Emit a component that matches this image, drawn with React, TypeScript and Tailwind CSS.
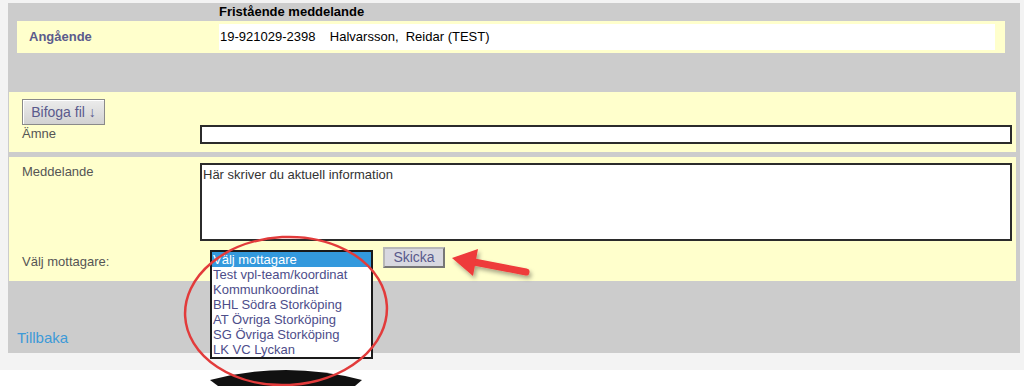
import React from "react";

const recipients = [
  "Välj mottagare",
  "Test vpl-team/koordinat",
  "Kommunkoordinat",
  "BHL Södra Storköping",
  "AT Övriga Storköping",
  "SG Övriga Storköping",
  "LK VC Lyckan",
];

function Annotations() {
  return (
    <svg
      className="pointer-events-none absolute left-0 top-0"
      width={1024}
      height={386}
      viewBox="0 0 1024 386"
    >
      <defs>
        <filter id="shadow" x="-20%" y="-40%" width="140%" height="180%">
          <feDropShadow dx="2" dy="3" stdDeviation="2" floodColor="#000" floodOpacity="0.35" />
        </filter>
      </defs>
      {/* black crescent below the list */}
      <path d="M210 380 Q286 360 362 380 L355 386 L218 386 Z" fill="#111" />
      {/* red ellipse around recipients */}
      <ellipse
        cx={286}
        cy={311}
        rx={101}
        ry={74}
        fill="none"
        stroke="#e23b3b"
        strokeWidth={2.5}
        transform="rotate(-3 286 311)"
      />
      {/* red arrow to Skicka */}
      <g filter="url(#shadow)">
        <line x1={474} y1={262} x2={526} y2={272} stroke="#ee3a3a" strokeWidth={7} strokeLinecap="round" />
        <polygon points="452,258 478,249 473,276" fill="#ee3a3a" />
      </g>
    </svg>
  );
}

export default function App() {
  return (
    <div
      className="relative h-[386px] w-[1024px] overflow-hidden bg-white text-[13px] text-[#555]"
      style={{ fontFamily: '"Liberation Sans", Arial, sans-serif' }}
    >
      <div className="h-[370px] bg-[#f3f3f3] pl-2 pr-1 pt-[3px]">
        <div className="flex h-[350px] flex-col bg-[#cccccc]">
          {/* header */}
          <div className="flex h-[18px] items-center pl-[211px] font-bold text-black">
            Fristående meddelande
          </div>

          {/* Angående */}
          <div className="ml-[9px] flex h-[32px] w-[988px] items-center bg-[#ffffcc]">
            <div className="w-[202px] pl-3 font-bold text-[#5b5b8c]">Angående</div>
            <div className="flex h-[26px] w-[776px] items-center bg-white pl-px text-black">
              19-921029-2398&nbsp;&nbsp;&nbsp;&nbsp;Halvarsson,&nbsp;&nbsp;Reidar (TEST)
            </div>
          </div>

          <div className="h-[39px]" />

          {/* Bifoga / Ämne */}
          <div className="ml-px h-[60px] w-[1007px] bg-[#ffffcc] pl-[13px] pt-[7px]">
            <button className="flex h-[26px] w-[83px] items-center justify-center border border-[#8a8a8a] bg-gradient-to-b from-[#ececec] to-[#d2d2d2] text-[14px] text-[#5a5a8c] shadow-[inset_1px_1px_0_#fff]">
              Bifoga fil ↓
            </button>
            <div className="flex h-[19px] items-start">
              <div className="w-[178px] leading-[17px]">Ämne</div>
              <div className="h-[19px] w-[812px] border-2 border-[#2b2b2b] bg-white" />
            </div>
          </div>

          <div className="h-[5px]" />

          {/* Meddelande / mottagare */}
          <div className="ml-px h-[124px] w-[1007px] bg-[#ffffcc] pl-[13px] pt-[6px]">
            <div className="flex">
              <div className="w-[178px] pt-[1px] leading-[16px]">Meddelande</div>
              <div className="h-[78px] w-[812px] border-2 border-[#2b2b2b] bg-white pl-[1px] pt-[2px] leading-[16px] text-[#333]">
                Här skriver du aktuell information
              </div>
            </div>
            <div className="mt-[6px] flex items-start">
              <div className="w-[188px] pt-[7px] leading-[16px]">Välj mottagare:</div>
              <div className="mt-[3px] w-[163px] border-2 border-[#1a1a1a] bg-white">
                {recipients.map((r, i) => (
                  <div
                    key={r}
                    className={
                      i === 0
                        ? "h-[15px] bg-[#3399dd] pl-px leading-[15px] text-white"
                        : "h-[15px] pl-px leading-[15px] text-[#4d4d8a]"
                    }
                  >
                    {r}
                  </div>
                ))}
              </div>
              <button className="ml-[10px] flex h-[21px] w-[62px] items-center justify-center border-2 border-t-[#b8b8b8] border-l-[#b8b8b8] border-r-[#777] border-b-[#777] bg-[#d8d8e0] text-[14px] text-[#5a5a8c]">
                Skicka
              </button>
            </div>
          </div>

          {/* Tillbaka */}
          <div className="mt-auto pb-[4px] pl-[9px]">
            <a className="text-[15px] text-[#3d9ad8]" href="#">
              Tillbaka
            </a>
          </div>
        </div>
      </div>
      <Annotations />
    </div>
  );
}
